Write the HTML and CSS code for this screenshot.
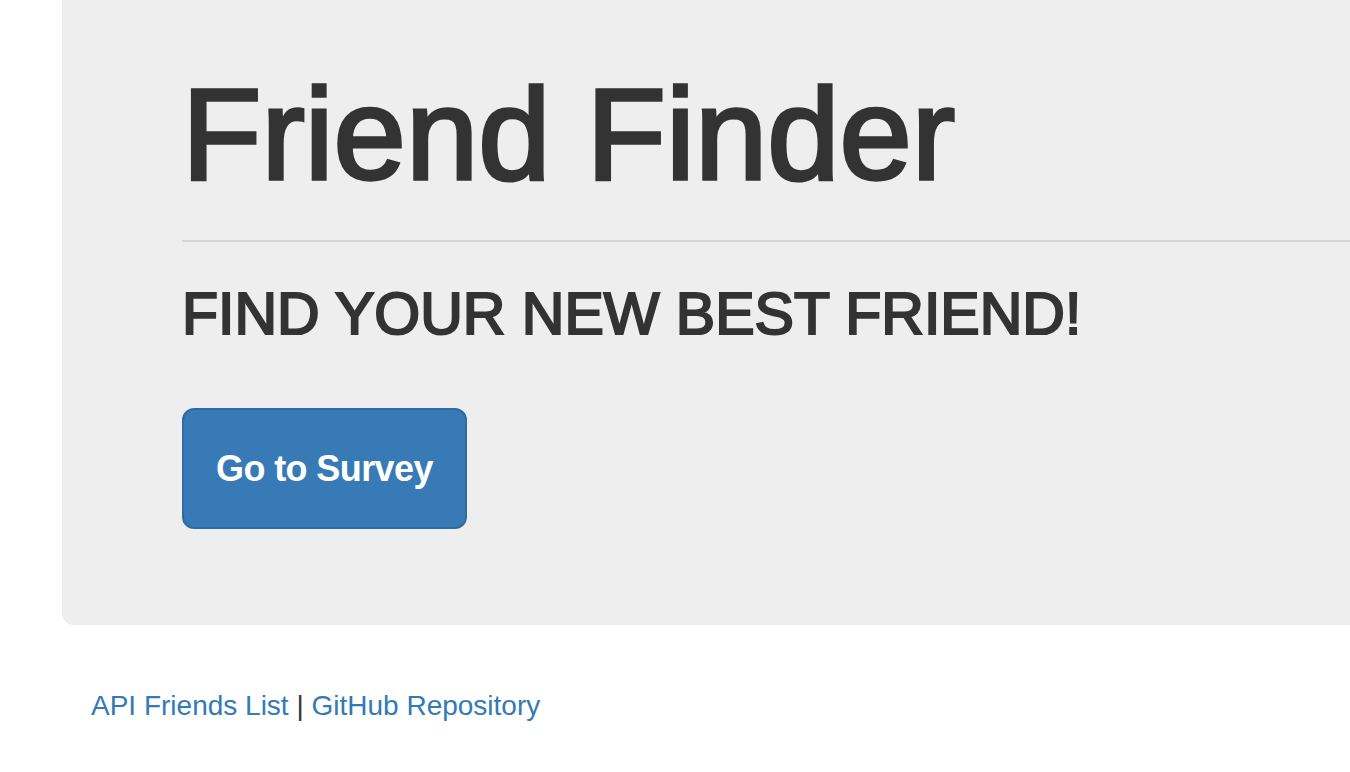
FILE: index.html
```html
<!DOCTYPE html>
<html lang="en">
<head>
<meta charset="utf-8">
<title>Friend Finder</title>
<link rel="stylesheet" href="styles.css">
</head>
<body>
<div class="container">
  <div class="jumbotron">
    <h1 class="title">Friend Finder</h1>
    <hr class="divider">
    <h2 class="subtitle">FIND YOUR NEW BEST FRIEND!</h2>
    <a class="btn-survey" href="#">Go to Survey</a>
  </div>
  <footer class="footer">
    <a href="#">API Friends List</a> | <a href="#">GitHub Repository</a>
  </footer>
</div>
</body>
</html>
```
FILE: styles.css
```css
html, body {
  margin: 0;
  padding: 0;
  background: #ffffff;
  overflow: hidden;
}

body {
  font-family: "Liberation Sans", Arial, Helvetica, sans-serif;
  color: #333333;
}

.container {
  padding-left: 62px;
}

.jumbotron {
  display: flex;
  flex-direction: column;
  align-items: flex-start;
  background: #eeeeee;
  border-radius: 0 0 12px 12px;
  margin-right: -40px;
  padding: 63px 0 96px 120px;
}

.title {
  margin: 0;
  font-size: 130px;
  font-weight: 400;
  line-height: 143px;
  color: #333333;
  -webkit-text-stroke: 3.5px #333333;
}

.divider {
  align-self: stretch;
  margin: 34px 0 0 0;
  border: 0;
  border-top: 2px solid #d5d5d5;
  height: 0;
}

.subtitle {
  margin: 39px 0 0 0;
  font-size: 59px;
  font-weight: 400;
  line-height: 67px;
  color: #333333;
  -webkit-text-stroke: 2.2px #333333;
}

.btn-survey {
  display: block;
  margin-top: 60px;
  padding: 34px 32px;
  font-size: 36px;
  font-weight: 700;
  line-height: 49px;
  letter-spacing: -0.6px;
  color: #ffffff;
  text-decoration: none;
  background: #377ab5;
  border: 2px solid #2e6da4;
  border-radius: 12px;
}

.footer {
  padding: 61px 0 0 29px;
  font-size: 28px;
  line-height: 40px;
  color: #333333;
}

.footer a {
  color: #337ab7;
  text-decoration: none;
}
```
